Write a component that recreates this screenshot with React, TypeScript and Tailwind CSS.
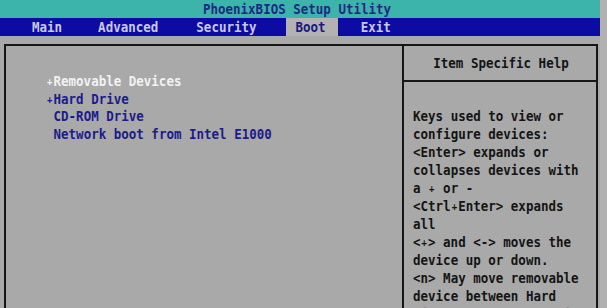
import React from "react";

const mono = "font-['DejaVu_Sans_Mono','Liberation_Mono',monospace] font-bold text-[12.5px]";

function Line({ children, className = "" }: { children: React.ReactNode; className?: string }) {
  return <div className={`whitespace-pre scale-y-[1.18] ${className}`}>{children}</div>;
}

function Plus() {
  return <span className="inline-block w-[7.53px] text-center text-[9px] leading-[9px] align-[1px]">+</span>;
}

export default function App() {
  const help: React.ReactNode[] = [
    "Keys used to view or",
    "configure devices:",
    "<Enter> expands or",
    "collapses devices with",
    <>a <Plus /> or -</>,
    <>&lt;Ctrl<Plus />Enter&gt; expands</>,
    "all",
    <>&lt;<Plus />&gt; and &lt;-&gt; moves the</>,
    "device up or down.",
    "<n> May move removable",
    "device between Hard",
    "Disks or Removable Disk",
  ];
  return (
    <div className={`w-[607px] h-[308px] overflow-hidden bg-[#b1b1b1] flex ${mono}`}>
      <div className="w-[600px] h-full flex flex-col">
        <div className="h-[18px] bg-[#3cb3ab] flex items-center justify-center leading-[18px] text-[#1d2a82]">
          <Line className="pr-[6px]">PhoenixBIOS Setup Utility</Line>
        </div>
        <div className="h-[18px] bg-[#0c0ca2] flex items-stretch leading-[18px] text-[#c9c9ea]">
          <Line className="ml-[32px]">Main</Line>
          <Line className="ml-[36px]">Advanced</Line>
          <Line className="ml-[38px]">Security</Line>
          <div className="ml-[29px] pl-[10px] pr-[12px] bg-[#b3b3b3] text-[#1a1a80]">
            <Line>Boot</Line>
          </div>
          <Line className="ml-[23px]">Exit</Line>
        </div>
        <div className="flex-1 bg-[#a9a9a9] pt-[8px] pl-[4px] pr-[2px]">
          <div className="h-full flex border-t-2 border-l-2 border-r-2 border-[#161616]">
            <div className="w-[396px] pt-[26px] pl-[40px] leading-[17.5px] text-[#1b1b8c]">
              <Line className="text-[#f2f2f2]"><Plus />Removable Devices</Line>
              <Line><Plus />Hard Drive</Line>
              <Line> CD-ROM Drive</Line>
              <Line> Network boot from Intel E1000</Line>
            </div>
            <div className="flex-1 flex flex-col border-l-2 border-[#161616] text-[#141414]">
              <div className="h-[36px] border-b-2 border-[#161616] flex items-center justify-center leading-[18px]">
                <Line className="pl-[2px]">Item Specific Help</Line>
              </div>
              <div className="pt-[25px] pl-[9px] leading-[18px]">
                {help.map((l, i) => (
                  <Line key={i}>{l}</Line>
                ))}
              </div>
            </div>
          </div>
        </div>
      </div>
    </div>
  );
}
